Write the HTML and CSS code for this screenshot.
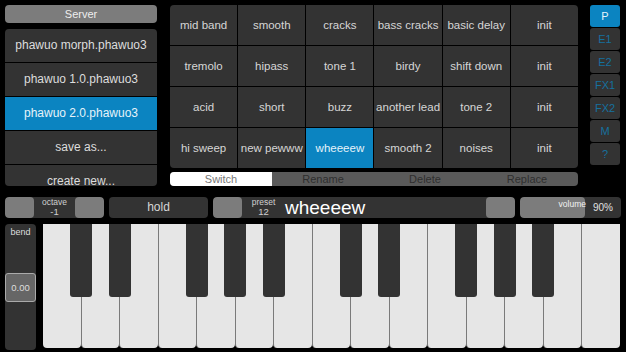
FILE: index.html
```html
<!DOCTYPE html>
<html>

<head>
    <title>Synth</title>
    <link rel="stylesheet" href="styles.css">
</head>

<body>
    <div class="app">
        <!-- Top: banks, preset grid, pages -->
        <div class="top">
            <div class="banks">
                <div class="server">Server</div>
                <div class="bank-list">
                    <div class="bank">phawuo morph.phawuo3</div>
                    <div class="bank">phawuo 1.0.phawuo3</div>
                    <div class="bank selected">phawuo 2.0.phawuo3</div>
                    <div class="bank">save as...</div>
                    <div class="bank">create new...</div>
                </div>
            </div>

            <div class="presets">
                <div class="preset-grid">
                    <div class="cell">mid band</div>
                    <div class="cell">smooth</div>
                    <div class="cell">cracks</div>
                    <div class="cell">bass cracks</div>
                    <div class="cell">basic delay</div>
                    <div class="cell">init</div>
                    <div class="cell">tremolo</div>
                    <div class="cell">hipass</div>
                    <div class="cell">tone 1</div>
                    <div class="cell">birdy</div>
                    <div class="cell">shift down</div>
                    <div class="cell">init</div>
                    <div class="cell">acid</div>
                    <div class="cell">short</div>
                    <div class="cell">buzz</div>
                    <div class="cell">another lead</div>
                    <div class="cell">tone 2</div>
                    <div class="cell">init</div>
                    <div class="cell">hi sweep</div>
                    <div class="cell">new pewww</div>
                    <div class="cell selected">wheeeew</div>
                    <div class="cell">smooth 2</div>
                    <div class="cell">noises</div>
                    <div class="cell">init</div>
                </div>
                <div class="tabs">
                    <div class="tab active">Switch</div>
                    <div class="tab">Rename</div>
                    <div class="tab">Delete</div>
                    <div class="tab">Replace</div>
                </div>
            </div>

            <div class="pages">
                <div class="page active">P</div>
                <div class="page">E1</div>
                <div class="page">E2</div>
                <div class="page">FX1</div>
                <div class="page">FX2</div>
                <div class="page">M</div>
                <div class="page">?</div>
            </div>
        </div>

        <!-- Control bar -->
        <div class="controls">
            <div class="group octave">
                <div class="step"></div>
                <div class="label-box">
                    <span class="small">octave</span>
                    <span class="value">-1</span>
                </div>
                <div class="step"></div>
            </div>
            <div class="hold">hold</div>
            <div class="group preset">
                <div class="step"></div>
                <div class="preset-body">
                    <div class="label-box">
                        <span class="small">preset</span>
                        <span class="value">12</span>
                    </div>
                    <div class="preset-name">wheeeew</div>
                </div>
                <div class="step"></div>
            </div>
            <div class="volume">
                <div class="volume-fill"><span>volume</span></div>
                <div class="volume-value">90%</div>
            </div>
        </div>

        <!-- Keyboard -->
        <div class="keyboard">
            <div class="bend">
                <div class="bend-label">bend</div>
                <div class="bend-value">0.00</div>
            </div>
            <div class="keys">
                <div class="white"></div>
                <div class="white"></div>
                <div class="white"></div>
                <div class="white"></div>
                <div class="white"></div>
                <div class="white"></div>
                <div class="white"></div>
                <div class="white"></div>
                <div class="white"></div>
                <div class="white"></div>
                <div class="white"></div>
                <div class="white"></div>
                <div class="white"></div>
                <div class="white"></div>
                <div class="white"></div>

                <div class="black" style="left: 6.667%"></div>
                <div class="black" style="left: 13.333%"></div>
                <div class="black" style="left: 26.667%"></div>
                <div class="black" style="left: 33.333%"></div>
                <div class="black" style="left: 40%"></div>
                <div class="black" style="left: 53.333%"></div>
                <div class="black" style="left: 60%"></div>
                <div class="black" style="left: 73.333%"></div>
                <div class="black" style="left: 80%"></div>
                <div class="black" style="left: 86.667%"></div>
            </div>
        </div>
    </div>
</body>

</html>
```

FILE: styles.css
```css
/* Base */
body {
    font-family: "Liberation Sans", Arial, sans-serif;
    background-color: #000;
    margin: 0;
    padding: 0;
    color: #d6d6d6;
}

.app {
    width: 626px;
    height: 352px;
    overflow: hidden;
}

/* Top section */
.top {
    display: flex;
    padding: 5px 6px 0 5px;
}

.banks {
    width: 152px;
    margin-right: 13px;
}

.server {
    height: 18px;
    line-height: 18px;
    background-color: #7c7c7c;
    border-radius: 4px;
    text-align: center;
    font-size: 11px;
    color: #eee;
    margin-bottom: 6px;
}

.bank-list {
    height: 157px;
    overflow: hidden;
    border-radius: 4px;
}

.bank {
    height: 33px;
    line-height: 33px;
    background-color: #333;
    border-bottom: 1px solid #000;
    text-align: center;
    font-size: 12px;
    color: #ddd;
}

.bank.selected {
    background-color: #0b84c1;
    color: #e6f3fa;
}

.presets {
    width: 408px;
    margin-right: 12px;
}

.preset-grid {
    display: grid;
    grid-template-columns: repeat(6, 1fr);
    grid-template-rows: repeat(4, 40px);
    gap: 1px;
    border-radius: 4px;
    overflow: hidden;
}

.cell {
    background-color: #333;
    display: flex;
    align-items: center;
    justify-content: center;
    font-size: 11.5px;
    color: #d6d6d6;
    white-space: nowrap;
}

.cell.selected {
    background-color: #0b84c1;
    color: #e6f3fa;
}

.tabs {
    display: flex;
    margin-top: 4px;
    height: 14px;
    border-radius: 4px;
    overflow: hidden;
    background-color: #5a5a5a;
}

.tab {
    flex: 1;
    text-align: center;
    line-height: 14px;
    font-size: 11px;
    color: #2e2e2e;
}

.tab.active {
    background-color: #fff;
    color: #777;
}

.pages {
    width: 30px;
    display: flex;
    flex-direction: column;
    gap: 1px;
}

.page {
    height: 22px;
    line-height: 22px;
    border-radius: 3px;
    background-color: #333;
    color: #16709e;
    text-align: center;
    font-size: 11px;
}

.page.active {
    background-color: #0b84c1;
    color: #e6f3fa;
}

/* Control bar */
.controls {
    display: flex;
    gap: 5px;
    height: 21px;
    margin-top: 11px;
    padding: 0 5px;
}

.group {
    display: flex;
    border-radius: 4px;
    overflow: hidden;
    background-color: #333;
}

.octave {
    width: 99px;
}

.step {
    width: 29px;
    background-color: #7c7c7c;
    border-radius: 4px;
}

.label-box {
    flex: 1;
    display: flex;
    flex-direction: column;
    align-items: center;
    justify-content: center;
    font-size: 8.5px;
    line-height: 9px;
    color: #cfcfcf;
}

.label-box .value {
    font-size: 9.5px;
    line-height: 10px;
}

.hold {
    width: 99px;
    background-color: #333;
    border-radius: 4px;
    text-align: center;
    line-height: 21px;
    font-size: 12px;
    color: #d6d6d6;
}

.preset {
    width: 302px;
}

.preset-body {
    flex: 1;
    display: flex;
    align-items: center;
}

.preset-body .label-box {
    flex: none;
    width: 43px;
}

.preset-name {
    font-size: 19px;
    color: #fff;
    line-height: 21px;
}

.volume {
    width: 101px;
    display: flex;
    border-radius: 4px;
    overflow: hidden;
    background-color: #333;
}

.volume-fill {
    width: 65px;
    background-color: #7c7c7c;
    border-radius: 4px;
    text-align: right;
    font-size: 8.5px;
    line-height: 9px;
    color: #f2f2f2;
    padding-top: 3px;
    box-sizing: border-box;
}

.volume-fill span {
    margin-right: -1px;
}

.volume-value {
    flex: 1;
    text-align: center;
    line-height: 21px;
    font-size: 10px;
    color: #e0e0e0;
}

/* Keyboard */
.keyboard {
    display: flex;
    margin-top: 6px;
    padding: 0 6px 0 5px;
    height: 126px;
}

.bend {
    width: 31px;
    margin-right: 7px;
    background-color: #333;
    border-radius: 4px;
    display: flex;
    flex-direction: column;
}

.bend-label {
    text-align: center;
    font-size: 9px;
    color: #ddd;
    margin-top: 3px;
    height: 10px;
}

.bend-value {
    margin-top: 36px;
    height: 27px;
    line-height: 27px;
    background-color: #666;
    border: 1px solid #aaa;
    border-radius: 3px;
    text-align: center;
    font-size: 9.5px;
    color: #ddd;
}

.keys {
    flex: 1;
    display: flex;
    position: relative;
    height: 124px;
}

.white {
    flex: 1;
    background-color: #e6e6e6;
    border-left: 1px solid #7a7a7a;
    border-radius: 0 0 4px 4px;
}

.white:first-child {
    border-left: none;
}

.black {
    position: absolute;
    top: 0;
    width: 22px;
    height: 73px;
    margin-left: -11px;
    background-color: #333;
    border-radius: 0 0 3px 3px;
}
```
